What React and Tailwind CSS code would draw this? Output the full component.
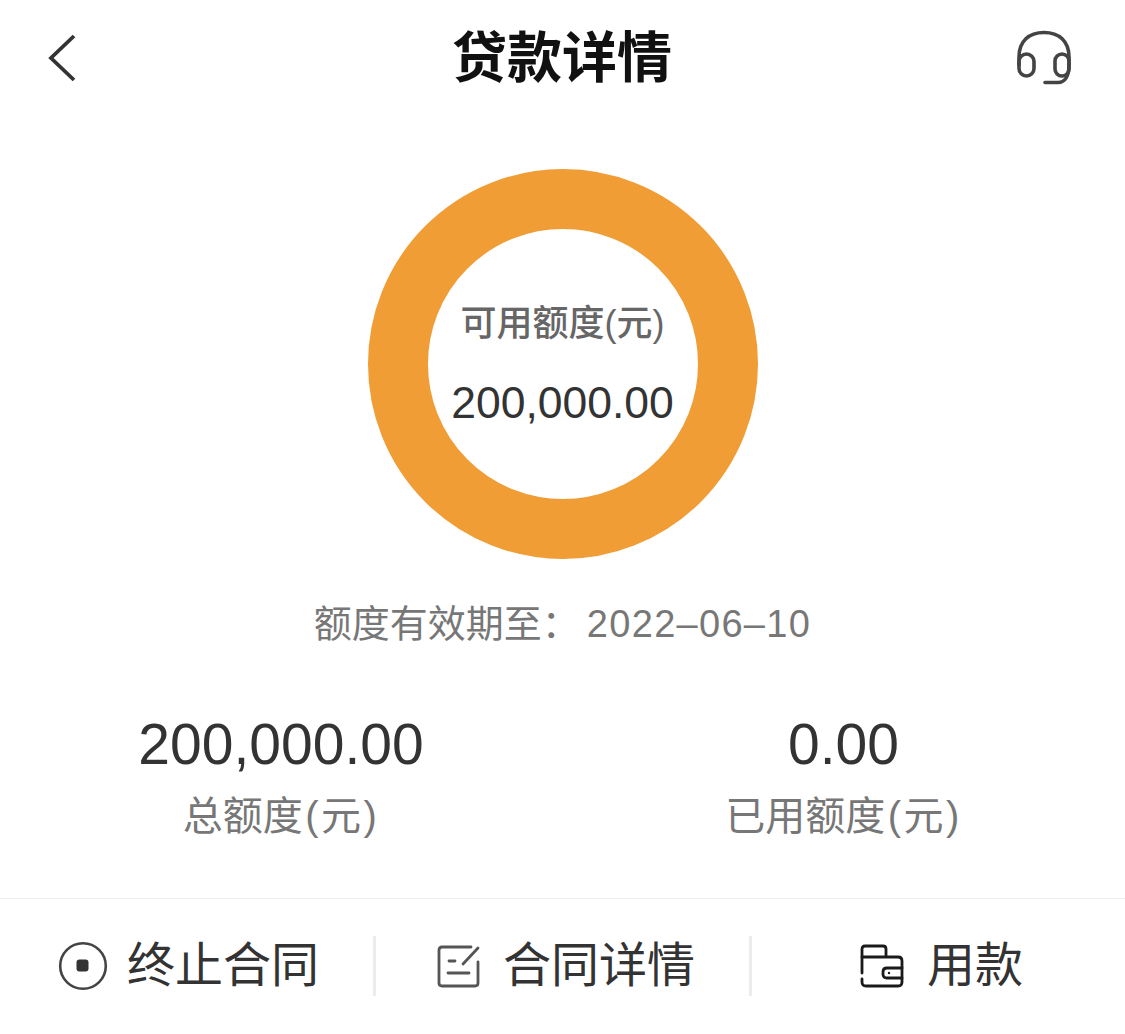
import React from "react";

const FONT = "font-['Liberation_Sans','Noto_Sans_CJK_SC',sans-serif]";

function BackIcon() {
  return (
    <svg width="30" height="48" viewBox="0 0 30 48" fill="none">
      <path d="M27 2 L4 24 L27 46" stroke="#333" strokeWidth="3.8" />
    </svg>
  );
}

function HeadsetIcon() {
  return (
    <svg width="56" height="56" viewBox="0 0 56 56" fill="none" stroke="#444" strokeWidth="3.6" strokeLinecap="round">
      <path d="M3 35 V27 C3 11 13 2.5 28 2.5 C43 2.5 53 11 53 27 V35" />
      <rect x="3" y="24" width="15" height="22" rx="7.5" />
      <rect x="39" y="24" width="14" height="22" rx="7" />
      <path d="M53 35 C53 46 49 52.5 42 52.5 H29" />
    </svg>
  );
}

function StopIcon() {
  return (
    <svg width="50" height="50" viewBox="0 0 50 50" fill="none">
      <circle cx="25" cy="25" r="22.8" stroke="#444" strokeWidth="2.6" />
      <rect x="18.5" y="18.5" width="12" height="12" rx="3" fill="#333" />
    </svg>
  );
}

function ContractIcon() {
  return (
    <svg width="44" height="44" viewBox="0 0 44 44" fill="none" stroke="#555" strokeWidth="2.8" strokeLinecap="round">
      <path d="M34 3 H5 Q2 3 2 6 V39 Q2 42 5 42 H38 Q41 42 41 39 V18" />
      <path d="M41 4 L26 20" />
      <path d="M12 17 H18" />
      <path d="M11 29 H32" />
    </svg>
  );
}

function WalletIcon() {
  return (
    <svg width="44" height="44" viewBox="0 0 44 44" fill="none" stroke="#1a1a1a" strokeWidth="2.8" strokeLinecap="round" strokeLinejoin="round">
      <path d="M2 29 V5 Q2 2 5 2 H23 Q26 2 26 5 V12" />
      <path d="M2 13 H38 Q42 13 42 17 V38 Q42 42 38 42 H6 Q2 42 2 38 V35" />
      <path d="M42 24 H27 Q23 24 23 28 V30 Q23 34 27 34 H42" />
      <circle cx="29" cy="29" r="1.2" fill="#1a1a1a" stroke="none" />
    </svg>
  );
}

// Amount caption with the unit in loosely set brackets
function UnitLabel({ text }) {
  return (
    <>
      {text}
      <span className="mx-[2.5px]">(</span>元<span className="mx-[2.5px]">)</span>
    </>
  );
}

function Stat({ value, label, className }) {
  return (
    <div className={`flex flex-col items-center ${className}`}>
      <div className="text-[57px] leading-[64px] text-[#333]">{value}</div>
      <div className="mt-[17px] text-[40px] leading-[46px] text-[#777]">
        <UnitLabel text={label} />
      </div>
    </div>
  );
}

function Action({ icon, label, className, iconGap }) {
  return (
    <div className={`flex items-center ${className}`}>
      {icon}
      <span className={`text-[48px] leading-[56px] text-[#333] ${iconGap}`}>{label}</span>
    </div>
  );
}

export default function App() {
  return (
    <div className={`flex h-[1034px] w-[1125px] flex-col overflow-hidden bg-white ${FONT}`}>
      <header className="grid h-[115px] grid-cols-[1fr_auto_1fr] items-center pl-[47px] pr-[53px]">
        <div className="flex justify-start">
          <BackIcon />
        </div>
        <h1 className="pl-[5px] text-[55px] font-bold leading-[60px] text-[#111]">贷款详情</h1>
        <div className="flex justify-end">
          <HeadsetIcon />
        </div>
      </header>

      <section className="mt-[54px] flex flex-col items-center">
        <div className="flex h-[390px] w-[390px] flex-col items-center rounded-full border-[60px] border-[#f09d36] bg-white">
          <div className="mt-[74px] whitespace-nowrap text-[36px] font-medium leading-[42px] text-[#666]">可用额度(元)</div>
          <div className="mt-[32px] whitespace-nowrap text-[44.5px] leading-[52px] text-[#333]">200,000.00</div>
        </div>
        <div className="mt-[43px] flex text-[38px] leading-[44px] text-[#777]">
          <span>额度有效期至：</span>
          <span className="ml-[7px] tracking-[1.3px]">2022–06–10</span>
        </div>
      </section>

      <section className="mt-[66px] flex">
        <Stat value="200,000.00" label="总额度" className="w-[562px]" />
        <Stat value="0.00" label="已用额度" className="w-[563px]" />
      </section>

      <footer className="mt-[59px] flex h-[136px] items-center border-t border-[#ededed] pb-[2px]">
        <Action icon={<StopIcon />} label="终止合同" className="h-[60px] w-[376px] border-r-[3px] border-[#ececec] pl-[58px]" iconGap="ml-[19px]" />
        <Action icon={<ContractIcon />} label="合同详情" className="h-[60px] w-[376px] border-r-[3px] border-[#ececec] pl-[61px]" iconGap="ml-[22px]" />
        <Action icon={<WalletIcon />} label="用款" className="h-[60px] pl-[108px]" iconGap="ml-[23px]" />
      </footer>
    </div>
  );
}
